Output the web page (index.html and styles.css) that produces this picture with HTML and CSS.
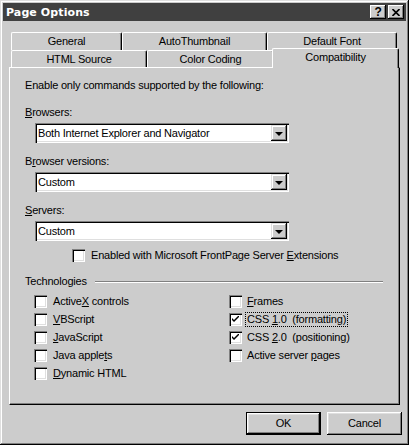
FILE: index.html
```html
<!DOCTYPE html>
<html lang="en">
<head>
    <meta charset="UTF-8">
    <meta name="viewport" content="width=device-width, initial-scale=1.0">
    <title>Page Options</title>
    <link rel="stylesheet" href="styles.css">
</head>
<body>
    <div class="window">
        <div class="titlebar">
            <span class="title">Page Options</span>
            <div class="title-buttons">
                <div class="tb-btn help">?</div>
                <div class="tb-btn">
                    <svg width="8" height="7" viewBox="0 0 8 7"><path d="M0.5 0 L7.5 7 M7.5 0 L0.5 7" stroke="#000" stroke-width="1.6"/></svg>
                </div>
            </div>
        </div>

        <div class="tabs">
            <div class="tab-row back">
                <div class="tab w-general">General</div>
                <div class="tab w-thumb">AutoThumbnail</div>
                <div class="tab w-font">Default Font</div>
            </div>
            <div class="tab-row front">
                <div class="tab w-source">HTML Source</div>
                <div class="tab w-color">Color Coding</div>
                <div class="tab w-compat active">Compatibility</div>
            </div>
        </div>

        <div class="panel">
            <div class="intro">Enable only commands supported by the following:</div>

            <div class="field">
                <div class="label"><u>B</u>rowsers:</div>
                <div class="combo">
                    <span class="combo-text">Both Internet Explorer and Navigator</span>
                    <span class="combo-btn"><span class="arrow"></span></span>
                </div>
            </div>
            <div class="field">
                <div class="label">B<u>r</u>owser versions:</div>
                <div class="combo">
                    <span class="combo-text">Custom</span>
                    <span class="combo-btn"><span class="arrow"></span></span>
                </div>
            </div>
            <div class="field">
                <div class="label"><u>S</u>ervers:</div>
                <div class="combo">
                    <span class="combo-text">Custom</span>
                    <span class="combo-btn"><span class="arrow"></span></span>
                </div>
            </div>

            <div class="check fpse">
                <span class="box"></span>
                <span>Enabled with Microsoft FrontPage Server <u>E</u>xtensions</span>
            </div>

            <div class="group-title">
                <span>Technologies</span>
                <span class="etch"></span>
            </div>

            <div class="tech">
                <div class="tech-col">
                    <div class="check"><span class="box"></span><span>Active<u>X</u> controls</span></div>
                    <div class="check"><span class="box"></span><span><u>V</u>BScript</span></div>
                    <div class="check"><span class="box"></span><span><u>J</u>avaScript</span></div>
                    <div class="check"><span class="box"></span><span>Java apple<u>t</u>s</span></div>
                    <div class="check"><span class="box"></span><span><u>D</u>ynamic HTML</span></div>
                </div>
                <div class="tech-col right">
                    <div class="check"><span class="box"></span><span><u>F</u>rames</span></div>
                    <div class="check"><span class="box checked"><svg width="7" height="7" viewBox="0 0 7 7"><path d="M0 2 L0 4 L2 6 L7 1 L7 -1 L2 4 Z" fill="#000"/></svg></span><span class="focus">CSS <u>1</u>.0&nbsp; (formatting)</span></div>
                    <div class="check"><span class="box checked"><svg width="7" height="7" viewBox="0 0 7 7"><path d="M0 2 L0 4 L2 6 L7 1 L7 -1 L2 4 Z" fill="#000"/></svg></span><span>CSS <u>2</u>.0&nbsp; (positioning)</span></div>
                    <div class="check"><span class="box"></span><span>Active server <u>p</u>ages</span></div>
                </div>
            </div>
        </div>

        <div class="actions">
            <div class="btn default">OK</div>
            <div class="btn">Cancel</div>
        </div>
    </div>
</body>
</html>
```

FILE: styles.css
```css
body {
    margin: 0;
    padding: 0;
    background-color: #cccccc;
    font-family: "Liberation Sans", Arial, sans-serif;
    font-size: 11px;
    line-height: 13px;
    letter-spacing: -0.2px;
    color: #000;
}
.window {
    width: 409px;
    height: 445px;
    box-sizing: border-box;
    padding: 3px;
    background-color: #cccccc;
    box-shadow: inset -1px -1px #000, inset 1px 1px #dfdfdf, inset -2px -2px #808080, inset 2px 2px #fff;
}
.titlebar {
    height: 18px;
    background-color: #404040;
    display: flex;
    align-items: center;
    justify-content: space-between;
    padding: 0 2px 0 3px;
}
.title {
    color: #fff;
    font-family: "DejaVu Sans", Verdana, sans-serif;
    font-weight: bold;
    font-size: 11px;
    letter-spacing: 0.1px;
}
.title-buttons {
    display: flex;
    gap: 2px;
}
.tb-btn {
    width: 16px;
    height: 14px;
    box-sizing: border-box;
    background-color: #cccccc;
    box-shadow: inset -1px -1px #000, inset 1px 1px #fff, inset -2px -2px #808080;
    display: flex;
    align-items: center;
    justify-content: center;
}
.tb-btn.help {
    font-weight: bold;
    font-size: 12px;
}
.tabs {
    margin-top: 11px;
    padding-left: 8px;
}
.tab-row {
    display: flex;
}
.tab {
    box-sizing: border-box;
    border-top: 1px solid #fff;
    border-left: 1px solid #fff;
    border-right: 1px solid #000;
    box-shadow: inset -1px 0 #808080;
    border-top-left-radius: 2px;
    border-top-right-radius: 2px;
    background-color: #cccccc;
    display: flex;
    align-items: center;
    justify-content: center;
}
.back .tab {
    height: 18px;
}
.front .tab {
    height: 17px;
}
.w-general { width: 111px; }
.w-thumb { width: 145px; }
.w-font { width: 130px; }
.w-source { width: 136px; }
.w-color { width: 127px; }
.w-compat { width: 123px; }
.tab.active {
    position: relative;
    z-index: 1;
    width: 127px;
    height: 20px;
    margin: -2px -2px -1px -2px;
    padding-bottom: 3px;
}
.panel {
    margin: 0 6px;
    height: 338px;
    box-sizing: border-box;
    border-top: 1px solid #fff;
    border-left: 1px solid #fff;
    border-right: 1px solid #000;
    border-bottom: 1px solid #000;
    box-shadow: inset -1px -1px #808080;
    padding: 11px 16px 0 15px;
}
.intro {
    margin-bottom: 14px;
}
.field {
    margin-bottom: 12px;
}
.label {
    margin-bottom: 4px;
}
.combo {
    margin-left: 10px;
    width: 254px;
    height: 20px;
    box-sizing: border-box;
    padding: 2px;
    background-color: #fff;
    box-shadow: inset 1px 1px #808080, inset 2px 2px #000, inset -1px -1px #fff, inset -2px -2px #dfdfdf;
    display: flex;
    align-items: center;
}
.combo-text {
    flex: 1;
    padding-left: 1px;
}
.combo-btn {
    width: 16px;
    height: 16px;
    box-sizing: border-box;
    background-color: #cccccc;
    box-shadow: inset -1px -1px #000, inset 1px 1px #dfdfdf, inset -2px -2px #808080, inset 2px 2px #fff;
    display: flex;
    align-items: center;
    justify-content: center;
}
.arrow {
    width: 0;
    height: 0;
    border-left: 4px solid transparent;
    border-right: 4px solid transparent;
    border-top: 4px solid #000;
    margin-top: 1px;
}
.check {
    display: flex;
    align-items: flex-start;
    height: 18px;
    gap: 6px;
}
.box {
    width: 13px;
    height: 13px;
    flex: none;
    box-sizing: border-box;
    background-color: #fff;
    box-shadow: inset 1px 1px #808080, inset 2px 2px #000, inset -1px -1px #fff, inset -2px -2px #dfdfdf;
    display: flex;
    align-items: center;
    justify-content: center;
}
.fpse {
    margin-top: -4px;
    padding-left: 47px;
}
.group-title {
    display: flex;
    align-items: center;
    margin-top: 8px;
    margin-bottom: 7px;
}
.etch {
    flex: 1;
    margin-left: 8px;
    margin-top: 1px;
    border-top: 1px solid #808080;
    border-bottom: 1px solid #fff;
}
.tech {
    display: flex;
    padding-left: 9px;
}
.tech-col {
    flex: none;
    width: 195px;
}
.tech-col.right {
    flex: 1;
    width: auto;
}
.tech-col.right .check {
    gap: 5px;
}
.focus {
    outline: 1px dotted #000;
    outline-offset: 0;
    padding: 0 1px;
    margin-left: -1px;
}
.actions {
    display: flex;
    justify-content: flex-end;
    gap: 6px;
    margin-top: 7px;
    padding-right: 4px;
}
.btn {
    width: 75px;
    height: 23px;
    box-sizing: border-box;
    background-color: #cccccc;
    box-shadow: inset -1px -1px #000, inset 1px 1px #fff, inset -2px -2px #808080, inset 2px 2px #dfdfdf;
    display: flex;
    align-items: center;
    justify-content: center;
}
.btn.default {
    border: 1px solid #000;
}
```
